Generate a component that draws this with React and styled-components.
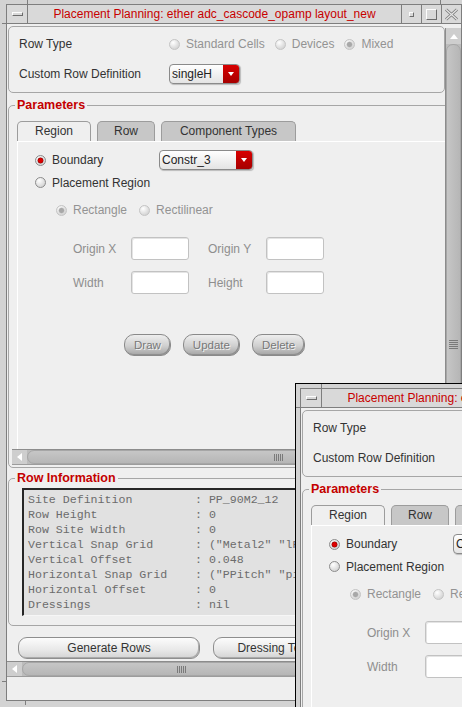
import React from "react";
import styled, { createGlobalStyle } from "styled-components";

const FRAME = "#d3d3d3";
const LINE = "#7e7e7e";
const RED = "#c40000";

const GlobalStyle = createGlobalStyle`
  html, body {
    margin: 0;
    padding: 0;
    overflow: hidden;
    background: ${FRAME};
  }
  body {
    font-family: "Liberation Sans", Arial, sans-serif;
    font-size: 12px;
    color: #333;
  }
`;

const Desktop = styled.div`
  position: relative;
  width: 462px;
  height: 707px;
  overflow: hidden;
  background: ${FRAME};
`;

const groove = `linear-gradient(${LINE}, ${LINE})`;

const Frame = styled.div`
  position: absolute;
  left: ${p => p.$x}px;
  top: ${p => p.$y}px;
  width: 466px;
  height: 707px;
  box-sizing: border-box;
  display: flex;
  padding: 4px;
  border: 1px solid ${p => (p.$active ? "#000" : FRAME)};
  background-color: ${FRAME};
  background-repeat: no-repeat;
  background-image: ${groove}, ${groove}, ${groove}, ${groove}, ${groove},
    ${groove}, ${groove}, ${groove};
  background-size: 1px 5px, 1px 5px, 5px 1px, 5px 1px, 1px 5px, 1px 5px,
    5px 1px, 5px 1px;
  background-position: left 25px top 0, right 25px top 0, left 0 top 23px,
    right 0 top 23px, left 23px bottom 0, right 23px bottom 0,
    left 0 bottom 23px, right 0 bottom 23px;
`;

const Inner = styled.div`
  flex: 1;
  display: flex;
  flex-direction: column;
  border: 1px solid ${LINE};
  background: #efefef;
  min-width: 0;
`;

const TitleBar = styled.div`
  display: flex;
  height: 18px;
  border-bottom: 1px solid ${LINE};
  background: #d9d9d9;
`;

const TitleButton = styled.div`
  flex: none;
  width: ${p => (p.$side === "left" ? 20 : 19)}px;
  display: flex;
  align-items: center;
  justify-content: center;
  ${p =>
    p.$side === "left"
      ? `border-right: 1px solid ${LINE};`
      : `border-left: 1px solid ${LINE};`}
`;

const Bevel = styled.span`
  box-sizing: border-box;
  width: ${p => p.$w}px;
  height: ${p => p.$h}px;
  border: 1px solid;
  border-color: #fdfdfd #6c6c6c #6c6c6c #fdfdfd;
`;

const Title = styled.div`
  flex: 1;
  min-width: 0;
  text-align: center;
  line-height: 18px;
  color: #c80000;
  white-space: nowrap;
  overflow: hidden;
`;

const Body = styled.div`
  flex: 1;
  display: grid;
  grid-template-columns: 1fr 16px;
  grid-template-rows: 637px 16px 1fr;
  min-height: 0;
`;

const Viewport = styled.div`
  overflow: hidden;
  min-width: 0;
`;

const Content = styled.div`
  width: 560px;
  padding-top: 2px;
`;

const Corner = styled.div`
  background: #efefef;
`;

const Footer = styled.div`
  grid-column: 1 / -1;
`;

/* scroll bars */

const Bar = styled.div`
  display: flex;
  box-sizing: border-box;
  background: #bcbcbc;
  flex-direction: ${p => (p.$vertical ? "column" : "row")};
  ${p =>
    p.$vertical
      ? `border-left: 1px solid #8c8c8c; margin-top: 4px;`
      : `height: 16px; border-top: 1px solid #8c8c8c; border-bottom: 1px solid #9c9c9c;`}
`;

const triangles = {
  up: "border-left: 4px solid transparent; border-right: 4px solid transparent; border-bottom: 5px solid #fff;",
  down: "border-left: 4px solid transparent; border-right: 4px solid transparent; border-top: 5px solid #fff;",
  left: "border-top: 4px solid transparent; border-bottom: 4px solid transparent; border-right: 5px solid #fff;",
  right: "border-top: 4px solid transparent; border-bottom: 4px solid transparent; border-left: 5px solid #fff;",
};

const Arrow = styled.span`
  flex: none;
  box-sizing: border-box;
  width: 15px;
  height: ${p => (p.$vertical ? 16 : 14)}px;
  display: flex;
  align-items: center;
  justify-content: center;
  background: #cecece;
  &::before {
    content: "";
    ${p => triangles[p.$dir]}
  }
`;

const Thumb = styled.span`
  flex: ${p => (p.$size ? `0 0 ${p.$size}px` : "1")};
  box-sizing: border-box;
  display: flex;
  align-items: center;
  justify-content: center;
  border: 1px solid #a6a6a6;
  border-radius: 7px;
  background: linear-gradient(
    ${p => (p.$vertical ? "90deg" : "180deg")},
    #c6c6c6,
    #b6b6b6
  );
`;

const Grip = styled.span`
  width: ${p => (p.$vertical ? 9 : 9)}px;
  height: ${p => (p.$vertical ? 9 : 7)}px;
  background: repeating-linear-gradient(
    ${p => (p.$vertical ? "180deg" : "90deg")},
    #7a7a7a 0 1px,
    transparent 1px 2px
  );
`;

const Trough = styled.span`
  flex: 1;
`;

function ScrollBar({ vertical, thumb }) {
  return (
    <Bar $vertical={vertical}>
      <Arrow $dir={vertical ? "up" : "left"} $vertical={vertical} />
      <Thumb $vertical={vertical} $size={thumb}>
        <Grip $vertical={vertical} />
      </Thumb>
      {!vertical && <Trough />}
      <Arrow $dir={vertical ? "down" : "right"} $vertical={vertical} />
    </Bar>
  );
}

/* form parts */

const TopGroup = styled.div`
  box-sizing: border-box;
  width: 437px;
  height: 67px;
  margin-left: 1px;
  padding: 2px 0 0 10px;
  border: 1px solid #a6a6a6;
  border-radius: 5px;
`;

const FormRow = styled.div`
  display: flex;
  align-items: center;
  height: ${p => p.$h || 22}px;
  margin: ${p => p.$mt || 0}px 0 0 ${p => p.$ml || 0}px;
`;

const RowLabel = styled.span`
  flex: none;
  width: ${p => p.$w}px;
  color: ${p => (p.$disabled ? "#8e8e8e" : "#333")};
`;

const Option = styled.span`
  flex: none;
  display: inline-flex;
  align-items: center;
  gap: 6px;
  margin-right: ${p => p.$gap || 0}px;
  width: ${p => (p.$w ? `${p.$w}px` : "auto")};
  color: ${p => (p.$disabled ? "#939393" : "#333")};
`;

const Radio = styled.span`
  flex: none;
  box-sizing: border-box;
  width: 11px;
  height: 11px;
  border-radius: 50%;
  border: 1px solid ${p => (p.$disabled ? "#c4c4c4" : "#8c8c8c")};
  background: ${p =>
      p.$checked
        ? `radial-gradient(circle, ${p.$disabled ? "#a8a8a8" : "#dc0000"} 0 2px, ${
            p.$disabled ? "#bdbdbd" : "#7c0000"
          } 2.6px, transparent 3.3px), `
        : ""}
    radial-gradient(circle at 35% 30%, #ffffff, #d2d2d2 80%);
`;

const ComboBox = styled.div`
  flex: none;
  display: flex;
  box-sizing: border-box;
  width: ${p => p.$w}px;
  height: 20px;
  border: 1px solid #8a8a8a;
  border-radius: 4px;
  overflow: hidden;
  background: linear-gradient(#ffffff, #e4e4e4);
  box-shadow: 1px 1px 1px rgba(0, 0, 0, 0.22);
`;

const ComboText = styled.span`
  flex: 1;
  padding-left: 2px;
  line-height: 18px;
  color: #222;
  white-space: nowrap;
`;

const ComboArrow = styled.span`
  flex: none;
  width: 16px;
  display: flex;
  align-items: center;
  justify-content: center;
  background: linear-gradient(#d80000, #a60000);
  &::before {
    content: "";
    border-left: 3px solid transparent;
    border-right: 3px solid transparent;
    border-top: 4px solid #fff;
  }
`;

function Combo({ w, children }) {
  return (
    <ComboBox $w={w}>
      <ComboText>{children}</ComboText>
      <ComboArrow />
    </ComboBox>
  );
}

const Group = styled.fieldset`
  box-sizing: border-box;
  width: 559px;
  min-width: 0;
  margin: ${p => p.$mt}px 0 0 1px;
  padding: ${p => p.$pt}px 0 ${p => p.$pb}px 0;
  border: 1px solid #a6a6a6;
  border-radius: 5px;
`;

const GroupTitle = styled.legend`
  margin-left: 6px;
  padding: 0 2px;
  font: bold 12.5px/15px "Liberation Sans", Arial, sans-serif;
  color: ${RED};
`;

const ScrollArea = styled.div`
  margin: 0 3px;
  display: flex;
  flex-direction: column;
`;

const TabStrip = styled.div`
  display: flex;
  gap: 6px;
  height: 20px;
  margin-left: 5px;
`;

const Tab = styled.div`
  box-sizing: border-box;
  flex: none;
  width: ${p => p.$w}px;
  height: 20px;
  border: 1px solid #9c9c9c;
  border-bottom: none;
  border-radius: 5px 5px 0 0;
  background: ${p => (p.$active ? "#efefef" : "#c7c7c7")};
  text-align: center;
  line-height: 19px;
  color: #333;
`;

const Panel = styled.div`
  box-sizing: border-box;
  height: 308px;
  margin-left: 5px;
  padding: 7px 0 0 17px;
  border-top: 1px solid #fff;
  border-left: 1px solid #fff;
`;

const FieldGrid = styled.div`
  display: grid;
  grid-template-columns: 58px 77px 58px 58px;
  grid-auto-rows: 23px;
  row-gap: 11px;
  align-items: center;
  margin: 16px 0 0 38px;
  color: #8e8e8e;
`;

const TextField = styled.span`
  box-sizing: border-box;
  width: 58px;
  height: 23px;
  border: 1px solid #c2c2c2;
  border-radius: 3px;
  background: #fff;
  box-shadow: inset 1px 1px 0 #e4e4e4;
`;

const ButtonRow = styled.div`
  display: flex;
  gap: ${p => p.$gap}px;
  margin: ${p => p.$mt}px 0 0 ${p => p.$ml}px;
`;

const PushButton = styled.button`
  flex: none;
  box-sizing: border-box;
  height: 22px;
  width: ${p => (p.$w ? `${p.$w}px` : "auto")};
  padding: 0 9px;
  border: 1px solid ${p => (p.$disabled ? "#8a8a8a" : "#8e8e8e")};
  border-radius: ${p => (p.$disabled ? 10 : 9)}px;
  background: ${p =>
    p.$disabled
      ? "linear-gradient(#eeeeee, #cfcfcf 55%, #a4a4a4)"
      : "linear-gradient(#fcfcfc, #e8e8e8 60%, #d4d4d4)"};
  box-shadow: inset -1px -1px 0 ${p => (p.$disabled ? "#8f8f8f" : "#aaaaaa")};
  font-family: "Liberation Sans", Arial, sans-serif;
  font-size: ${p => (p.$disabled ? 11.5 : 12)}px;
  color: ${p => (p.$disabled ? "#787878" : "#333")};
  text-shadow: ${p => (p.$disabled ? "1px 1px 0 #f2f2f2" : "none")};
  white-space: nowrap;
  overflow: hidden;
`;

const InfoBox = styled.pre`
  box-sizing: border-box;
  width: 520px;
  height: 128px;
  margin: 0 0 0 13px;
  padding: 2px 0 0 4px;
  border-style: solid;
  border-width: 2px 1px 1px 2px;
  border-color: #262626 #f6f6f6 #f6f6f6 #262626;
  background: #e1e1e1;
  font: 11.6px/15px "Liberation Mono", "Courier New", monospace;
  color: #6c6c6c;
`;

const rowInfo = [
  ["Site Definition", "PP_90M2_12"],
  ["Row Height", "0"],
  ["Row Site Width", "0"],
  ["Vertical Snap Grid", '("Metal2" "lPitch")'],
  ["Vertical Offset", "0.048"],
  ["Horizontal Snap Grid", '("PPitch" "pitch")'],
  ["Horizontal Offset", "0"],
  ["Dressings", "nil"],
];

function CloseIcon() {
  const d = "M2 1.5 L13 11.5 M13 1.5 L2 11.5";
  return (
    <svg width="15" height="13" viewBox="0 0 15 13">
      <path d={d} stroke="#7a7a7a" strokeWidth="3" fill="none" />
      <path d={d} stroke="#e6e6e6" strokeWidth="1.2" fill="none" />
    </svg>
  );
}

function Dialog({ x, y, active }) {
  return (
    <Frame $x={x} $y={y} $active={active}>
      <Inner>
        <TitleBar>
          <TitleButton $side="left">
            <Bevel $w={11} $h={4} />
          </TitleButton>
          <Title>Placement Planning: ether adc_cascode_opamp layout_new</Title>
          <TitleButton>
            <Bevel $w={5} $h={5} />
          </TitleButton>
          <TitleButton>
            <Bevel $w={11} $h={11} />
          </TitleButton>
          <TitleButton>
            <CloseIcon />
          </TitleButton>
        </TitleBar>

        <Body>
          <Viewport>
            <Content>
              <TopGroup>
                <FormRow $h={30}>
                  <RowLabel $w={150}>Row Type</RowLabel>
                  <Option $disabled $gap={10}>
                    <Radio $disabled />
                    Standard Cells
                  </Option>
                  <Option $disabled $gap={10}>
                    <Radio $disabled />
                    Devices
                  </Option>
                  <Option $disabled>
                    <Radio $disabled $checked />
                    Mixed
                  </Option>
                </FormRow>
                <FormRow $h={30}>
                  <RowLabel $w={150}>Custom Row Definition</RowLabel>
                  <Combo w={71}>singleH</Combo>
                </FormRow>
              </TopGroup>

              <Group $mt={5} $pt={8} $pb={2}>
                <GroupTitle>Parameters</GroupTitle>
                <ScrollArea>
                  <TabStrip>
                    <Tab $w={74} $active>
                      Region
                    </Tab>
                    <Tab $w={58}>Row</Tab>
                    <Tab $w={135}>Component Types</Tab>
                  </TabStrip>
                  <Panel>
                    <FormRow>
                      <Option $w={124}>
                        <Radio $checked />
                        Boundary
                      </Option>
                      <Combo w={94}>Constr_3</Combo>
                    </FormRow>
                    <FormRow $h={23}>
                      <Option>
                        <Radio />
                        Placement Region
                      </Option>
                    </FormRow>
                    <FormRow $mt={5} $ml={21}>
                      <Option $disabled $gap={12}>
                        <Radio $disabled $checked />
                        Rectangle
                      </Option>
                      <Option $disabled>
                        <Radio $disabled />
                        Rectilinear
                      </Option>
                    </FormRow>
                    <FieldGrid>
                      <span>Origin X</span>
                      <TextField />
                      <span>Origin Y</span>
                      <TextField />
                      <span>Width</span>
                      <TextField />
                      <span>Height</span>
                      <TextField />
                    </FieldGrid>
                    <ButtonRow $gap={12} $mt={40} $ml={89}>
                      <PushButton $disabled>Draw</PushButton>
                      <PushButton $disabled>Update</PushButton>
                      <PushButton $disabled>Delete</PushButton>
                    </ButtonRow>
                  </Panel>
                  <ScrollBar thumb={502} />
                </ScrollArea>
              </Group>

              <Group $mt={3} $pt={2} $pb={9}>
                <GroupTitle>Row Information</GroupTitle>
                <InfoBox>
                  {rowInfo
                    .map(([name, value]) => `${name.padEnd(24)}: ${value}`)
                    .join("\n")}
                </InfoBox>
              </Group>

              <ButtonRow $gap={13} $mt={11} $ml={11}>
                <PushButton $w={182}>Generate Rows</PushButton>
                <PushButton $w={154}>Dressing Templates</PushButton>
                <PushButton $w={120}>Close</PushButton>
              </ButtonRow>
            </Content>
          </Viewport>
          <ScrollBar vertical />
          <ScrollBar thumb={318} />
          <Corner />
          <Footer />
        </Body>
      </Inner>
    </Frame>
  );
}

export default function App() {
  return (
    <Desktop>
      <GlobalStyle />
      <Dialog x={1} y={-1} />
      <Dialog x={295} y={383} active />
    </Desktop>
  );
}
